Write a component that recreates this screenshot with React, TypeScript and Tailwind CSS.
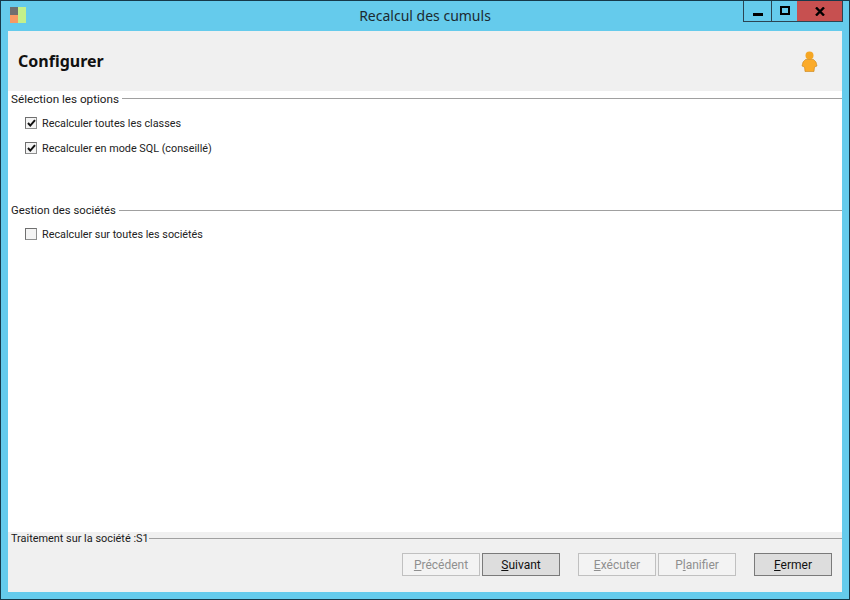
const uiFont = "font-['Roboto','Liberation_Sans',sans-serif]"

function GroupTitle({ label, className, textClass, lineClass }: { label: string; className?: string; textClass?: string; lineClass?: string }) {
  return (
    <div className={`flex items-center h-[14px] pl-[3px] ${className ?? ''}`}>
      <span className={`${textClass ?? 'text-[11.7px]'} leading-[14px] text-[#1a1a1a] whitespace-nowrap`}>{label}</span>
      <span className={`flex-1 h-px -mt-[2px] bg-[#a0a0a0] ${lineClass ?? 'ml-[3px]'}`} />
    </div>
  )
}

function Check({ label, checked, className }: { label: string; checked?: boolean; className?: string }) {
  return (
    <div className={`flex items-center h-[14px] pl-[17px] ${className ?? ''}`}>
      <span className="w-[12px] h-[12px] -mt-[2px] border border-[#8e8f8f] border-t-[#6f6f6f] border-l-[#6f6f6f] bg-[#f4f4f4] flex items-center justify-center shrink-0">
        {checked && (
          <svg width="9" height="9" viewBox="0 0 9 9">
            <path d="M1 4 L3.3 6.6 L8 1.2" fill="none" stroke="#111" strokeWidth="2" />
          </svg>
        )}
      </span>
      <span className="ml-[5px] text-[10.8px] leading-[14px] text-[#222] whitespace-nowrap">{label}</span>
    </div>
  )
}

function WizardButton({ before, mnemonic, after, disabled, className }: { before?: string; mnemonic: string; after: string; disabled?: boolean; className?: string }) {
  return (
    <button
      className={`w-[78px] h-[23px] border text-[12px] leading-[20px] ${
        disabled ? 'border-[#c0c0c0] bg-[#f3f3f3] text-[#8f8f8f]' : 'border-[#7a7a7a] bg-[#dddddd] text-[#111]'
      } ${className ?? ''}`}
    >
      {before}
      <span className="underline">{mnemonic}</span>
      {after}
    </button>
  )
}

export default function App() {
  return (
    <div className={`w-[850px] h-[600px] flex flex-col bg-[#65cbec] border border-[#16394a] ${uiFont}`}>
      <div className="h-[30px] grid grid-cols-[1fr_auto_1fr] shrink-0">
        <div className="pl-[9px] pt-[6px]">
          <div className="flex w-[16px] h-[16px]">
            <div className="w-[8px] flex flex-col">
              <div className="h-[8px] bg-[#6f6f6f]" />
              <div className="h-[8px] bg-[#f79a63]" />
            </div>
            <div className="w-[8px] bg-[#c4f08a]" />
          </div>
        </div>
        <div className="font-['Noto_Sans',sans-serif] text-[14px] leading-[30px] text-[#1c2a30]">Recalcul des cumuls</div>
        <div className="flex justify-end pr-[6px]">
          <div className="flex h-[21px] border-x border-b border-[#2b4452]">
            <div className="w-[28px] flex items-end justify-center pb-[5px] border-r border-[#2b4452]">
              <span className="w-[10px] h-[3px] bg-black" />
            </div>
            <div className="w-[25px] flex items-center justify-center pb-[1px]">
              <span className="w-[10px] h-[9px] border-2 border-black" />
            </div>
            <div className="w-[45px] bg-[#c75050] flex items-center justify-center">
              <svg width="10" height="9" viewBox="0 0 10 9">
                <path d="M1 0.5 L9 8.5 M9 0.5 L1 8.5" stroke="#000" strokeWidth="2.4" />
              </svg>
            </div>
          </div>
        </div>
      </div>

      <div className="mx-[7px] h-[561px] flex flex-col bg-white shrink-0">
        <div className="h-[60px] bg-[#f0f0f0] flex items-center justify-between pl-[10px] pr-[24px] shrink-0">
          <h1 className="font-['Noto_Sans',sans-serif] text-[16px] font-bold text-[#111]">Configurer</h1>
          <svg width="17" height="21" viewBox="0 0 17 21">
            <circle cx="8.5" cy="4.5" r="4" fill="#f5a623" />
            <path d="M4.5 8.5 H12.5 L15 11 L16 15 L13.5 16 L13 20.5 H4 L3.5 16 L1 15 L2 11 Z" fill="#fbab2a" stroke="#c98519" strokeWidth="0.6" />
          </svg>
        </div>

        <div className="flex-1 flex flex-col pt-px">
          <GroupTitle label="Sélection les options" />
          <Check label="Recalculer toutes les classes" checked className="mt-[11px]" />
          <Check label="Recalculer en mode SQL (conseillé)" checked className="mt-[11px]" />
          <GroupTitle label="Gestion des sociétés" className="mt-[48px]" textClass="text-[11.3px]" />
          <Check label="Recalculer sur toutes les sociétés" className="mt-[10px]" />
        </div>

        <div className="h-[60px] bg-[#f0f0f0] shrink-0">
          <GroupTitle label="Traitement sur la société :S1" textClass="text-[10.9px]" lineClass="ml-0" />
          <div className="flex justify-end pr-[10px] mt-[7px]">
            <WizardButton mnemonic="P" after="récédent" disabled />
            <WizardButton mnemonic="S" after="uivant" className="ml-[2px]" />
            <WizardButton mnemonic="E" after="xécuter" disabled className="ml-[18px]" />
            <WizardButton before="P" mnemonic="l" after="anifier" disabled className="ml-[2px]" />
            <WizardButton mnemonic="F" after="ermer" className="ml-[18px]" />
          </div>
        </div>
      </div>
    </div>
  )
}
